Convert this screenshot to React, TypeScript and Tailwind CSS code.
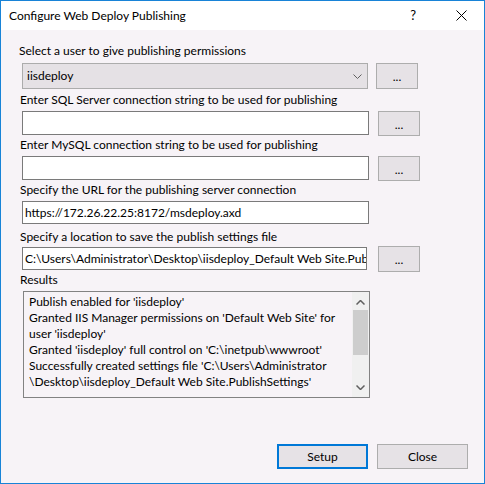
import React from "react";

const font = { fontFamily: 'Lato, "Noto Sans", sans-serif' };

function DotsButton({ className = "" }: { className?: string }) {
  return (
    <button className={`flex h-[25px] w-[42px] shrink-0 items-start justify-center border border-[#adadad] bg-[#e6e2e6] text-[12px] leading-[16px] text-black ${className}`}>
      <span className="mt-[5px]">...</span>
    </button>
  );
}

function Label({ children, className = "" }: { children: React.ReactNode; className?: string }) {
  return <div className={`h-[16px] text-[12px] leading-[16px] text-black ${className}`}>{children}</div>;
}

export default function App() {
  return (
    <div className="flex h-[484px] w-[485px] flex-col border border-[#1883d7] bg-white text-[12px]" style={font}>
      <div className="flex h-[29px] items-center bg-white">
        <span className="ml-[8px] text-[12px] text-black">Configure Web Deploy Publishing</span>
        <span className="ml-auto mr-[40px] text-[13px] text-black">?</span>
        <svg width="11" height="11" viewBox="0 0 11 11" className="mr-[17px]">
          <path d="M0.5 0.5 L10.5 10.5 M10.5 0.5 L0.5 10.5" stroke="#000" strokeWidth="1" />
        </svg>
      </div>

      <div className="flex flex-1 flex-col bg-[#f7f3f7] pl-[18px]">
        <Label className="mt-[13px]">Select a user to give publishing permissions</Label>
        <div className="mt-[4px] flex h-[26px] items-center">
          <div className="ml-[3px] flex h-[26px] w-[346px] items-center border border-[#acacac] bg-[#e5e1e5] pl-[4px] pr-[5px]">
            <span>iisdeploy</span>
            <svg width="9" height="5" viewBox="0 0 9 5" className="ml-auto">
              <path d="M0.5 0.5 L4.5 4.5 L8.5 0.5" stroke="#606060" fill="none" strokeWidth="1" />
            </svg>
          </div>
          <DotsButton className="ml-[8px] h-[26px] w-[41px]" />
        </div>

        <Label className="mt-[3px] ml-[1px]">Enter SQL Server connection string to be used for publishing</Label>
        <div className="mt-[3px] flex h-[24px] items-start">
          <div className="ml-[3px] h-[24px] w-[347px] border border-[#7a7a7a] bg-white" />
          <DotsButton className="ml-[9px] h-[24px]" />
        </div>

        <Label className="mt-[2px] ml-[1px]">Enter MySQL connection string to be used for publishing</Label>
        <div className="mt-[3px] flex h-[24px] items-start">
          <div className="ml-[3px] h-[24px] w-[347px] border border-[#7a7a7a] bg-white" />
          <DotsButton className="ml-[9px]" />
        </div>

        <Label className="mt-[2px] ml-[1px]">Specify the URL for the publishing server connection</Label>
        <div className="mt-[3px] ml-[3px] flex h-[23px] w-[347px] items-center border border-[#7a7a7a] bg-white pl-[2px]">
          https://172.26.22.25:8172/msdeploy.axd
        </div>

        <Label className="mt-[5px] ml-[1px]">Specify a location to save the publish settings file</Label>
        <div className="mt-[2px] flex h-[23px] items-center">
          <div className="ml-[3px] flex h-[23px] w-[345px] shrink-0 items-center overflow-hidden whitespace-nowrap border border-[#7a7a7a] bg-white pl-[2px]">
            C:\Users\Administrator\Desktop\iisdeploy_Default Web Site.Pub
          </div>
          <DotsButton className="ml-[11px] h-[26px]" />
        </div>

        <Label className="mt-[2px] ml-[1px]">Results</Label>
        <div className="mt-[3px] ml-[4px] flex h-[107px] w-[347px] border border-[#828282] bg-[#f7f3f7]">
          <div className="flex-1 whitespace-nowrap pl-[5px] pt-[2px] text-[12px] leading-[16px] text-black">
            <div>Publish enabled for 'iisdeploy'</div>
            <div>Granted IIS Manager permissions on 'Default Web Site' for</div>
            <div>user 'iisdeploy'</div>
            <div>Granted 'iisdeploy' full control on 'C:\inetpub\wwwroot'</div>
            <div>Successfully created settings file 'C:\Users\Administrator</div>
            <div>\Desktop\iisdeploy_Default Web Site.PublishSettings'</div>
          </div>
          <div className="flex w-[17px] flex-col items-center bg-[#f0f0f0]">
            <svg width="9" height="5" viewBox="0 0 9 5" className="mt-[8px]">
              <path d="M0.5 4.5 L4.5 0.5 L8.5 4.5" stroke="#606060" fill="none" strokeWidth="1.5" />
            </svg>
            <div className="mt-[5px] h-[45px] w-[15px] bg-[#cdcdcd]" />
            <svg width="9" height="5" viewBox="0 0 9 5" className="mt-auto mb-[7px]">
              <path d="M0.5 0.5 L4.5 4.5 L8.5 0.5" stroke="#606060" fill="none" strokeWidth="1.5" />
            </svg>
          </div>
        </div>

        <div className="mt-[46px] flex">
          <button className="ml-[258px] h-[25px] w-[91px] border-2 border-[#0078d7] bg-[#e6e2e6] text-[12px] text-black">
            Setup
          </button>
          <button className="ml-[9px] h-[25px] w-[91px] border border-[#adadad] bg-[#e6e2e6] text-[12px] text-black">
            Close
          </button>
        </div>
      </div>
    </div>
  );
}
